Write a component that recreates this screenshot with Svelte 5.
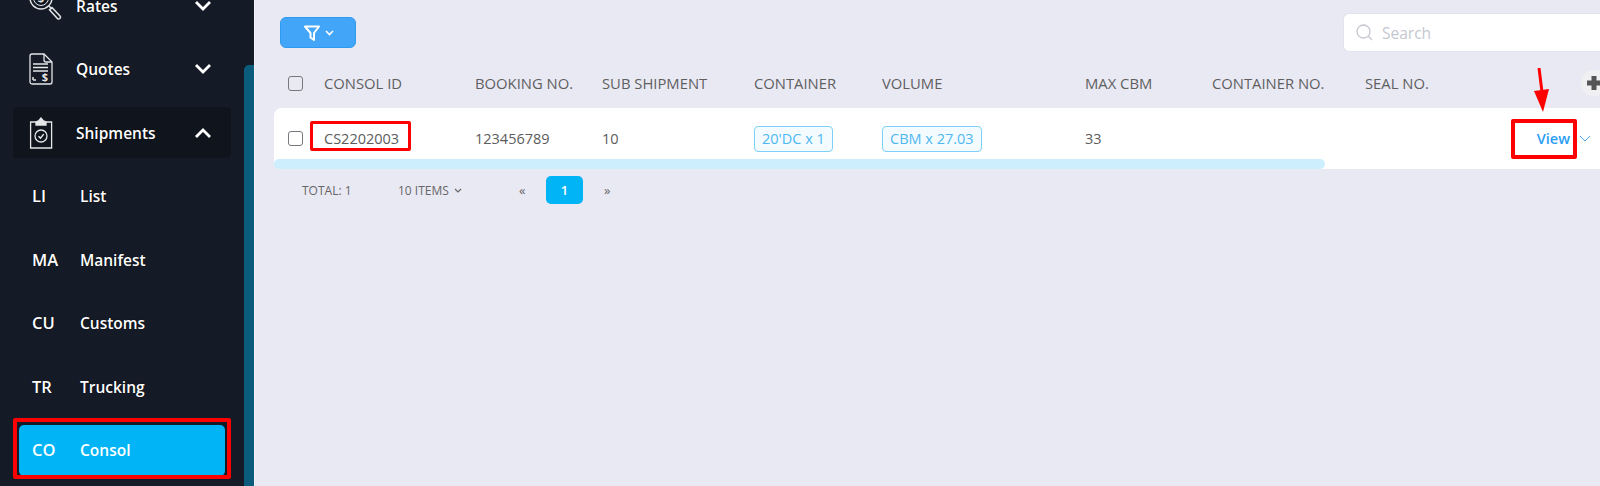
<script>
  let mainNav = [
    { label: 'Rates', icon: 'rates', open: false },
    { label: 'Quotes', icon: 'quotes', open: false },
    { label: 'Shipments', icon: 'shipments', open: true }
  ];
  let subNav = [
    { short: 'LI', label: 'List' },
    { short: 'MA', label: 'Manifest' },
    { short: 'CU', label: 'Customs' },
    { short: 'TR', label: 'Trucking' },
    { short: 'CO', label: 'Consol', active: true }
  ];
  let columns = ['CONSOL ID', 'BOOKING NO.', 'SUB SHIPMENT', 'CONTAINER', 'VOLUME', 'MAX CBM', 'CONTAINER NO.', 'SEAL NO.'];
</script>

<div class="page">
  <aside class="sidebar">
    <nav class="nav">
      {#each mainNav as item}
        <div class="item" class:open={item.open}>
          <span class="icon">
            {#if item.icon === 'rates'}
              <svg width="34" height="44" viewBox="0 0 34 44" fill="none" stroke="#e4e6e8" stroke-width="1.5">
                <circle cx="12" cy="14" r="11" />
                <circle cx="12" cy="14" r="7.5" stroke-width="1" />
                <path d="M20 22l3 3M23 23.5l8 8.5a1.6 1.6 0 0 1-2.6 2.4l-7.9-8.6z" />
                <text x="12" y="18" font-size="11" font-weight="700" text-anchor="middle" fill="#e4e6e8" stroke="none">$</text>
              </svg>
            {:else if item.icon === 'quotes'}
              <svg width="24" height="32" viewBox="0 0 24 32" fill="none" stroke="#e4e6e8" stroke-width="1.3">
                <path d="M3 1h12l8 8v20a2 2 0 0 1-2 2H3a2 2 0 0 1-2-2V3a2 2 0 0 1 2-2z" />
                <path d="M15 1v6a2 2 0 0 0 2 2h6" />
                <path d="M4 11h15M4 14.5h15M4 18h15M4 27h3M4 24v3" stroke-width="1.5" />
                <text x="16" y="28" font-size="11" font-weight="700" text-anchor="middle" fill="#e4e6e8" stroke="none">$</text>
              </svg>
            {:else}
              <svg width="24" height="32" viewBox="0 0 24 32" fill="none" stroke="#e4e6e8" stroke-width="1.3">
                <path d="M7 5H1.600v26h21V5H17" />
                <path d="M7 8V5l3-1.500L12 1l2 2.500L17 5v3z" fill="#e4e6e8" />
                <circle cx="12" cy="19" r="6" />
                <path d="M9.500 19.300l2 1.800 3.200-4" stroke-width="1.500" />
              </svg>
            {/if}
          </span>
          <span class="label">{item.label}</span>
          <svg class="chev" width="18" height="12" viewBox="0 0 18 12" fill="none" stroke="#fff" stroke-width="2.800">
            <path d={item.open ? 'M2 10l7-7 7 7' : 'M2 2l7 7 7-7'} />
          </svg>
        </div>
      {/each}
      {#each subNav as item}
        <div class="item sub" class:active={item.active}>
          <span class="short">{item.short}</span>
          <span class="label">{item.label}</span>
        </div>
      {/each}
    </nav>
    <div class="track"></div>
  </aside>

  <main class="main">
    <div class="toolbar">
      <button class="filter" aria-label="Filter">
        <svg width="18" height="18" viewBox="0 0 18 18" fill="none" stroke="#fff" stroke-width="2" stroke-linejoin="round">
          <path d="M2 2.500h14l-5 6.500v7l-3.500-2.500V9z" />
        </svg>
        <svg width="9" height="6" viewBox="0 0 9 6" fill="none" stroke="#fff" stroke-width="1.600">
          <path d="M1 1l3.500 3.500L8 1" />
        </svg>
      </button>
      <div class="search">
        <svg width="17" height="17" viewBox="0 0 17 17" fill="none" stroke="#c3c6cd" stroke-width="1.300">
          <circle cx="7.500" cy="7.500" r="6.500" />
          <path d="M12.300 12.300l3.700 3.700" />
        </svg>
        <span>Search</span>
      </div>
    </div>

    <div class="grid head">
      <span class="check"></span>
      {#each columns as col}
        <span>{col}</span>
      {/each}
      <span class="plus">
        <svg width="16" height="16" viewBox="0 0 16 16" fill="#555"><path d="M5.500 1h5v4.500H15v5h-4.500V15h-5v-4.500H1v-5h4.500z" /></svg>
      </span>
    </div>

    <div class="rowwrap">
      <div class="grid row">
        <span class="check"></span>
        <span><span class="mark">CS2202003</span></span>
        <span>123456789</span>
        <span>10</span>
        <span><span class="tag">20'DC x 1</span></span>
        <span><span class="tag">CBM x 27.03</span></span>
        <span>33</span>
        <span></span>
        <span></span>
        <span class="actions">
          <span class="view">View</span>
          <svg width="12" height="7" viewBox="0 0 12 7" fill="none" stroke="#4ca6ee" stroke-width="1"><path d="M1 1l5 5 5-5" /></svg>
        </span>
      </div>
      <div class="hscroll"></div>
    </div>

    <div class="pager">
      <span class="total">TOTAL: 1</span>
      <span class="size">10 ITEMS
        <svg width="8" height="5" viewBox="0 0 8 5" fill="none" stroke="#666" stroke-width="1.200"><path d="M1 1l3 3 3-3" /></svg>
      </span>
      <span class="step first">«</span>
      <span class="pagenum">1</span>
      <span class="step">»</span>
    </div>

    <svg class="arrow" width="20" height="46" viewBox="0 0 20 46">
      <path d="M5 0l3 24" stroke="#f00" stroke-width="3" fill="none" />
      <path d="M0 23l15-2-6 23z" fill="#f00" />
    </svg>
  </main>
</div>

<style>
  :global(body) {
    margin: 0;
    overflow: hidden;
    background: #e9e9f4;
  }
  .page {
    display: flex;
    height: 486px;
    overflow: hidden;
    font-family: 'Open Sans', 'Noto Sans', sans-serif;
    color: #666;
  }
  .sidebar {
    display: flex;
    flex: none;
    width: 254px;
    background: #141a26;
    overflow: hidden;
  }
  .nav {
    width: 244px;
    margin-top: -20px;
    padding: 0 13px;
    box-sizing: border-box;
    flex: none;
  }
  .item {
    display: flex;
    align-items: center;
    height: 51px;
    margin-bottom: 12.5px;
    padding-left: 16px;
    border-radius: 4px;
    color: #fff;
    font-size: 15.5px;
    font-weight: 600;
    text-shadow: 0 0 1px #000;
  }
  .item.open {
    background: #10141c;
  }
  .icon {
    display: flex;
    width: 47px;
    flex: none;
  }
  .chev {
    margin-left: auto;
    margin-right: 19px;
  }
  .sub {
    padding-left: 19px;
  }
  .short {
    width: 48px;
    flex: none;
    font-size: 16.5px;
    margin-top: -1px;
  }
  .item.active {
    position: relative;
    margin: 0 6px;
    padding-left: 13px;
    background: #00b4f5;
    border-radius: 5px;
    height: 51px;
    text-shadow: none;
  }
  .item.active::after {
    content: '';
    position: absolute;
    inset: -7px -6px -3px -6px;
    border: 4px solid #f00;
    border-radius: 2px;
  }
  .track {
    flex: 1;
    margin-top: 65px;
    background: #0b5c7c;
    border-radius: 5px 0 0 0;
  }
  .main {
    position: relative;
    flex: 1;
    min-width: 0;
    padding-left: 19px;
    border-left: 1px solid #f2f2f8;
  }
  .toolbar {
    display: flex;
    justify-content: space-between;
    align-items: flex-start;
    padding: 13px 0 0 6px;
    height: 51px;
  }
  .filter {
    display: flex;
    align-items: center;
    justify-content: center;
    gap: 4px;
    width: 76px;
    height: 31px;
    margin-top: 4px;
    padding: 0;
    background: #42a5f8;
    border: 1px solid #2f9bf0;
    border-radius: 6px;
  }
  .search {
    display: flex;
    align-items: center;
    gap: 9px;
    width: 257px;
    height: 39px;
    padding-left: 12px;
    box-sizing: border-box;
    background: #fff;
    border: 1px solid #e1e4ec;
    border-right: 0;
    border-radius: 6px 0 0 6px;
    color: #c5c8d0;
    font-size: 15.5px;
  }
  .grid {
    display: grid;
    grid-template-columns: 36px 151px 127px 152px 128px 203px 127px 153px 1fr auto;
    align-items: center;
    padding-left: 14px;
    font-size: 14.5px;
  }
  .head {
    height: 44px;
    padding-bottom: 6px;
    box-sizing: border-box;
    font-size: 14.8px;
    font-weight: 500;
    color: #5f5f5f;
  }
  .check {
    display: block;
    width: 15px;
    height: 15px;
    box-sizing: border-box;
    border: 1.500px solid #77777d;
    border-radius: 3px;
    background: #fff;
  }
  .head .check {
    background: transparent;
  }
  .plus {
    display: flex;
    align-items: center;
    justify-content: center;
    width: 26px;
    height: 26px;
    margin-right: -7px;
    border-radius: 50%;
    background: #f0f0f2;
  }
  .rowwrap {
    position: relative;
    background: #fff;
    border-radius: 8px 0 0 8px;
    height: 61px;
  }
  .row {
    height: 61px;
    color: #5c5c5c;
  }
  .mark {
    position: relative;
    display: inline-block;
  }
  .mark::after {
    content: '';
    position: absolute;
    inset: -8px -12px -3px -14px;
    border: 3.500px solid #f00;
    border-radius: 2px;
  }
  .tag {
    display: inline-block;
    padding: 0 7px;
    height: 24px;
    line-height: 24px;
    border: 1px solid #7fd0f8;
    border-radius: 4px;
    background: #f4fbff;
    color: #4fb8f0;
  }
  .actions {
    display: flex;
    align-items: center;
    justify-content: flex-end;
    gap: 9px;
    padding-right: 9px;
  }
  .view {
    position: relative;
    color: #2a9df4;
    font-size: 14.500px;
    font-weight: 600;
  }
  .view::after {
    content: '';
    position: absolute;
    inset: -10px -7px -11px -26px;
    border: 4px solid #f00;
    border-radius: 2px;
  }
  .hscroll {
    position: absolute;
    left: 0;
    bottom: 0;
    width: 1051px;
    height: 10px;
    background: #cdeffd;
    border-radius: 5px;
  }
  .pager {
    display: flex;
    align-items: center;
    height: 36px;
    margin-top: 3px;
    padding-left: 28px;
    font-size: 12px;
  }
  .total {
    width: 96px;
  }
  .size {
    display: flex;
    align-items: center;
    gap: 5px;
    width: 121px;
  }
  .step {
    font-size: 13px;
  }
  .step.first {
    width: 27px;
  }
  .pagenum {
    width: 37px;
    height: 28px;
    margin-right: 21px;
    line-height: 28px;
    text-align: center;
    background: #00b4f5;
    border-radius: 5px;
    color: #fff;
    font-weight: 600;
    font-size: 13px;
  }
  .arrow {
    position: absolute;
    left: 1279px;
    top: 68px;
  }
</style>
